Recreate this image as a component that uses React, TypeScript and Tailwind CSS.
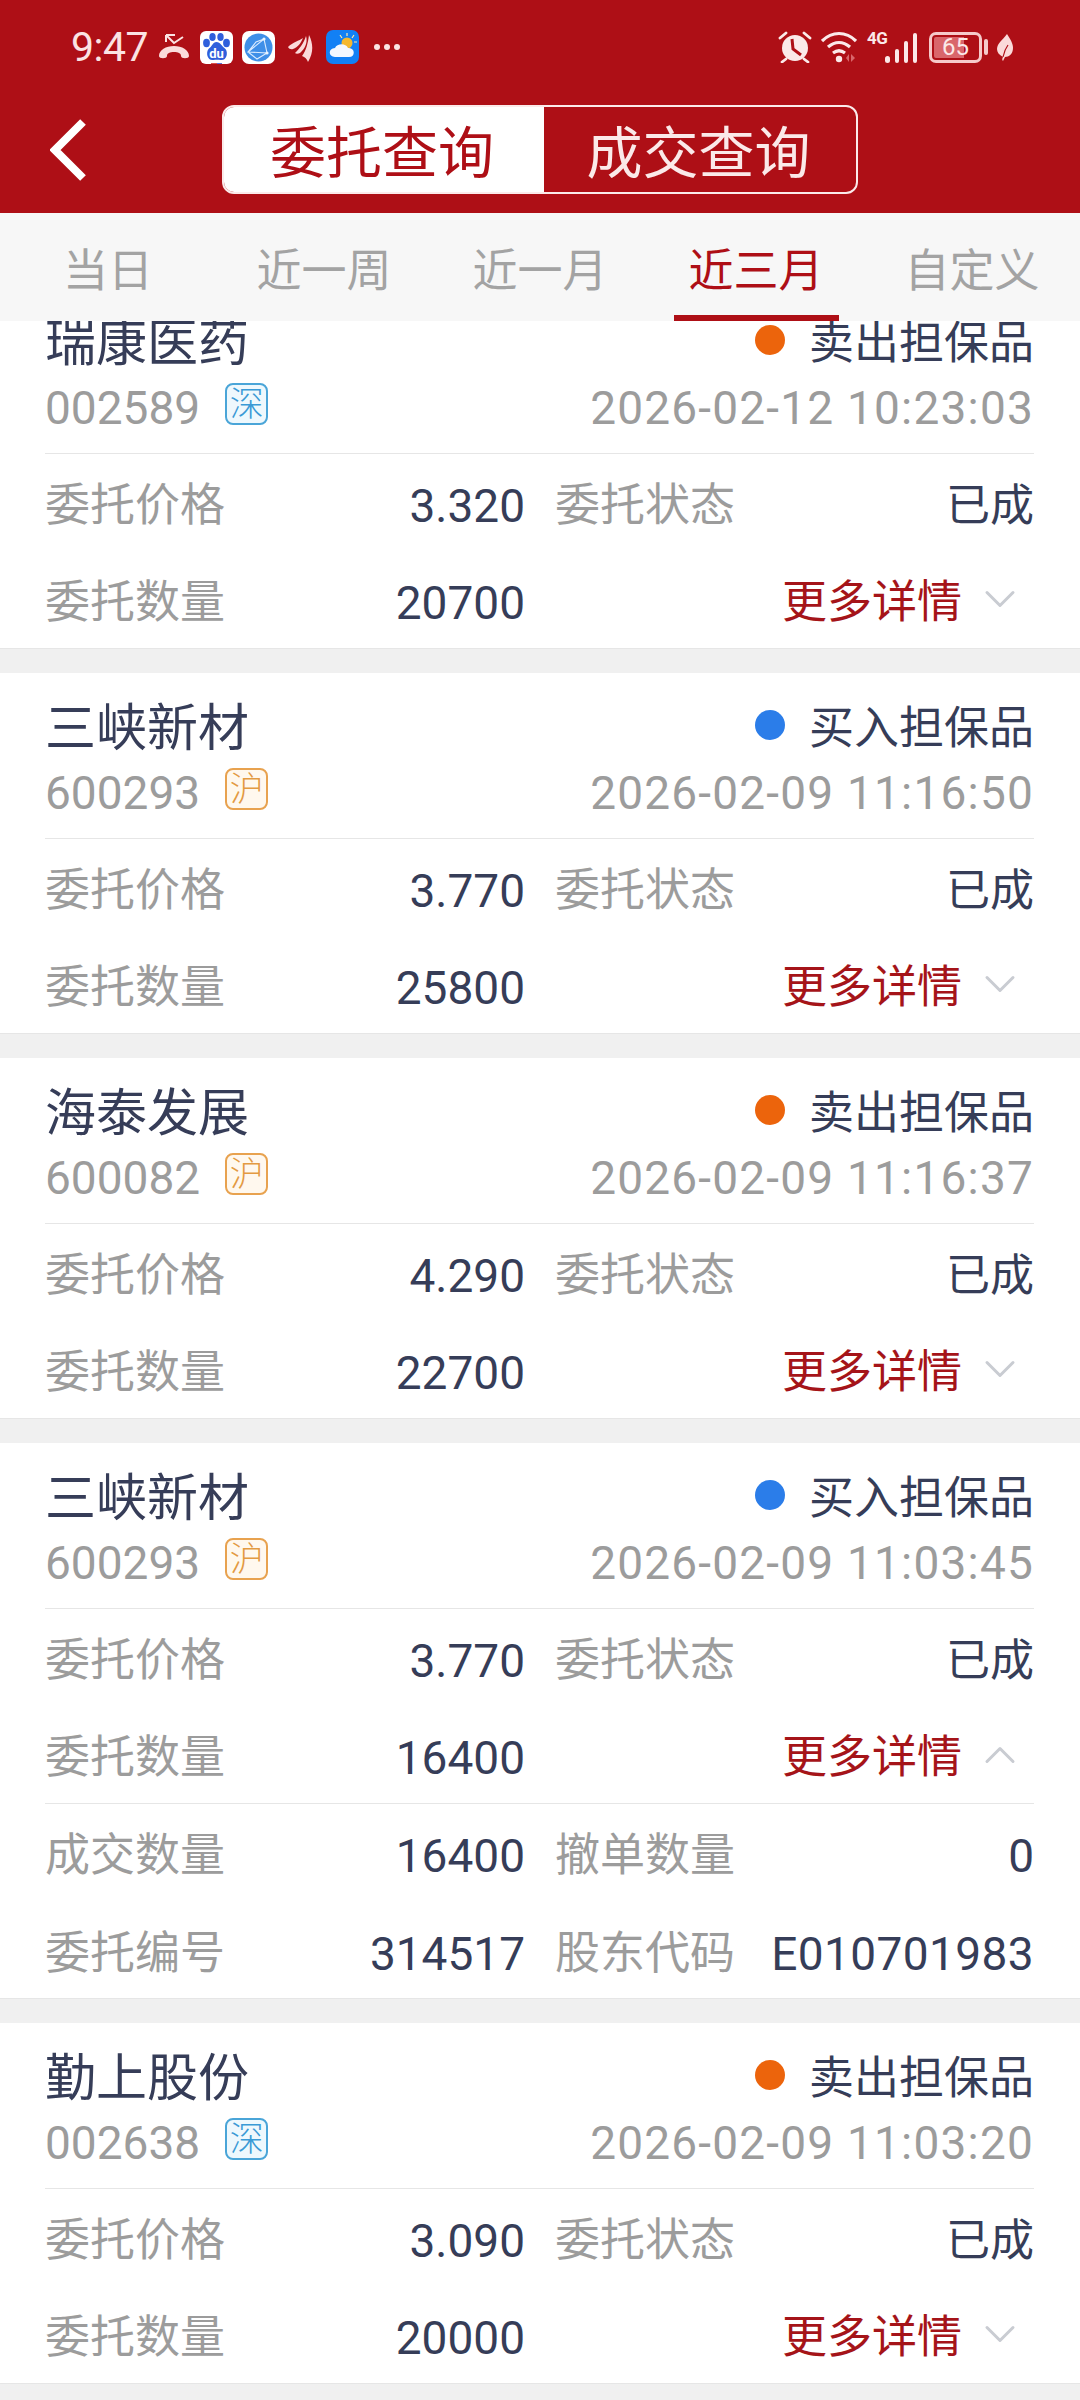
import { ChevronDown, ChevronUp } from 'lucide-react'

interface Order {
  name: string
  code: string
  market: '深' | '沪'
  side: '卖出担保品' | '买入担保品'
  time: string
  price: string
  qty: string
  extra?: { filled: string; cancelled: string; no: string; holder: string }
}

const orders: Order[] = [
  { name: '瑞康医药', code: '002589', market: '深', side: '卖出担保品', time: '2026-02-12 10:23:03', price: '3.320', qty: '20700' },
  { name: '三峡新材', code: '600293', market: '沪', side: '买入担保品', time: '2026-02-09 11:16:50', price: '3.770', qty: '25800' },
  { name: '海泰发展', code: '600082', market: '沪', side: '卖出担保品', time: '2026-02-09 11:16:37', price: '4.290', qty: '22700' },
  {
    name: '三峡新材',
    code: '600293',
    market: '沪',
    side: '买入担保品',
    time: '2026-02-09 11:03:45',
    price: '3.770',
    qty: '16400',
    extra: { filled: '16400', cancelled: '0', no: '314517', holder: 'E010701983' },
  },
  { name: '勤上股份', code: '002638', market: '深', side: '卖出担保品', time: '2026-02-09 11:03:20', price: '3.090', qty: '20000' },
]

const tabs = ['当日', '近一周', '近一月', '近三月', '自定义']

function StatusLeft() {
  return (
    <div className="flex items-center">
      <span className="w-[77px] text-[41px] leading-none tracking-[-0.5px] text-[#fbe3e3]">9:47</span>
      {/* missed call */}
      <svg className="ml-[10px] h-[26px] w-[32px]" viewBox="0 0 32 26" fill="none">
        <path d="M8 1h9M8 1v7M8 1l8 8 9-6" stroke="#fbe3e3" strokeWidth="2" />
        <path d="M1 22c0-6 7-10 15-10s15 4 15 10c0 3-8 3-8 0 0-3-3-4-7-4s-7 1-7 4c0 3-8 3-8 0z" fill="#fbdcdc" />
      </svg>
      {/* baidu */}
      <div className="ml-[10px] flex h-[33px] w-[33px] rounded-[6px] bg-white">
        <svg className="h-[33px] w-[33px]" viewBox="0 0 33 33">
          <ellipse cx="6.5" cy="12" rx="3.4" ry="4.2" fill="#2f5fdc" />
          <ellipse cx="12.5" cy="6" rx="3.2" ry="4" fill="#2f5fdc" />
          <ellipse cx="20.5" cy="6" rx="3.2" ry="4" fill="#2f5fdc" />
          <ellipse cx="26.5" cy="12" rx="3.4" ry="4.2" fill="#2f5fdc" />
          <path d="M16.5 11c4 0 5 4 9 7 3 4 1 12-5 11-2-.5-5-.5-7 0-6 1-8-7-5-11 4-3 4-7 8-7z" fill="#2f5fdc" />
          <text x="16.5" y="27" textAnchor="middle" fontSize="13" fontWeight="700" fill="#fff" fontFamily="Roboto, sans-serif">du</text>
          <path d="M11 32.5h6" stroke="#d8504f" strokeWidth="1" />
          <path d="M17 32.5h5" stroke="#5b6fd8" strokeWidth="1" />
        </svg>
      </div>
      {/* browser */}
      <div className="ml-[9px] flex h-[33px] w-[33px] items-center justify-center rounded-[7px] bg-white">
        <svg className="h-[29px] w-[29px]" viewBox="0 0 29 29" fill="none">
          <circle cx="14.5" cy="14.5" r="14" fill="#3f8fe8" />
          <path d="M4 19L20 6l3 14-10 6zM20 6l-8 3-8 10 19 1" stroke="#dcecff" strokeWidth="1.1" />
          <circle cx="20" cy="6" r="1.6" fill="#eaf4ff" />
          <circle cx="23" cy="20" r="1.6" fill="#eaf4ff" />
        </svg>
      </div>
      {/* feather */}
      <svg className="ml-[13px] h-[29px] w-[25px]" viewBox="0 0 25 29">
        <path d="M0 14C5 9 11 8 15 5c-2 5-5 9-10 11-2 .5-4 0-5-2z" fill="#fbdada" />
        <path d="M7 20c4-4 9-10 11-17 2 6-1 13-6 17-2 1-4 1-5 0z" fill="#fbdada" />
        <path d="M14 23c4-5 6-13 7-21 4 8 5 17-1 27-1-3-3-5-6-6z" fill="#fbdada" />
      </svg>
      {/* weather */}
      <div className="ml-[13px] flex h-[34px] w-[33px] items-center justify-center rounded-[7px] bg-[#1280f5]">
        <svg className="h-[30px] w-[30px]" viewBox="0 0 30 30">
          <circle cx="19" cy="11" r="5.5" fill="#f5b82e" />
          <path d="M19 1v3M26 3l-2 3M12 3l2 3M29 10h-3" stroke="#ffe9a8" strokeWidth="1.2" />
          <path d="M7 25c-7 0-7-9 0-9 2-5 11-5 13 0 7-1 8 9 1 9z" fill="#f4f8ff" />
        </svg>
      </div>
      {/* overflow */}
      <div className="ml-[15px] flex gap-[4px]">
        <span className="h-[6px] w-[6px] rounded-full bg-[#fbe3e3]" />
        <span className="h-[6px] w-[6px] rounded-full bg-[#fbe3e3]" />
        <span className="h-[6px] w-[6px] rounded-full bg-[#fbe3e3]" />
      </div>
    </div>
  )
}

function StatusRight() {
  return (
    <div className="flex items-center">
      {/* alarm */}
      <svg className="h-[32px] w-[34px]" viewBox="0 0 34 32">
        <path d="M2 7l6-5M32 7l-6-5M8 28l-4 3M26 28l4 3" stroke="#fbe9e9" strokeWidth="2.8" strokeLinecap="round" />
        <circle cx="17" cy="17" r="13" fill="#fbe9e9" />
        <path d="M14 8l1 10 8 6" stroke="#ae0f16" strokeWidth="3" fill="none" />
      </svg>
      {/* wifi */}
      <svg className="ml-[9px] h-[32px] w-[36px]" viewBox="0 0 36 32" fill="none">
        <path d="M1 10c10-10 24-10 34 0M7 16c7-6 15-6 22 0M12 22c4-3 8-3 12 0" stroke="#fbe9e9" strokeWidth="3.2" />
        <circle cx="18" cy="28" r="3.2" fill="#fbe9e9" />
        <path d="M28 23v8l-3-4zM30 23v8l4-4z" fill="#d9666b" />
      </svg>
      <div className="ml-[10px] flex h-[31px] w-[50px] items-end">
        <span className="mb-[16px] w-0 text-[17px] font-bold leading-none tracking-[-0.5px] text-[#fbe9e9]">4G</span>
        <div className="flex w-full items-end justify-end gap-[5px]">
          <span className="h-[7px] w-[5px] rounded-full bg-[#fbe9e9]" />
          <span className="h-[14px] w-[4px] rounded-full bg-[#fbe9e9]" />
          <span className="h-[22px] w-[4px] rounded-full bg-[#fbe9e9]" />
          <span className="h-[30px] w-[4px] rounded-full bg-[#fbe9e9]" />
        </div>
      </div>
      {/* battery */}
      <div className="ml-[12px] flex h-[31px] w-[53px] items-center justify-center rounded-[7px] border-[3px] border-[#f6caca] bg-[linear-gradient(90deg,#d9666b_68%,transparent_68%)] bg-clip-content p-[2px]">
        <span className="text-[24px] leading-none text-[#fbe9e9]">65</span>
      </div>
      <span className="ml-[2px] h-[16px] w-[4px] rounded-full bg-[#f6caca]" />
      {/* leaf */}
      <svg className="ml-[9px] h-[27px] w-[16px]" viewBox="0 0 16 27">
        <path d="M10 0c4 6 6 10 6 14 0 6-4 9-8 9l-2 4c-1-1-1-2 0-4-4-2-6-5-6-8 0-6 6-9 10-15z" fill="#fbdada" />
        <path d="M6 23c1-5 2-8 5-12" stroke="#ae0f16" strokeWidth="1.2" fill="none" />
      </svg>
    </div>
  )
}

function Field({ label, value, children }: { label?: string; value?: string; children?: React.ReactNode }) {
  return (
    <div className="flex h-[92px] items-center justify-between pt-[3px]">
      <span className="text-[45px] leading-none text-[#9c9c9c]">{label}</span>
      {children ?? <span className="text-[46px] leading-none text-[#363d58]">{value}</span>}
    </div>
  )
}

function MoreLink({ open }: { open: boolean }) {
  const Icon = open ? ChevronUp : ChevronDown
  return (
    <span className="flex items-center text-[45px] leading-none text-[#a51419]">
      更多详情
      <Icon className={`ml-[12px] mr-[8px] h-[52px] w-[52px] text-[#c9ccd2] ${open ? 'mb-[6px]' : 'mb-[8px]'}`} strokeWidth={1.4} />
    </span>
  )
}

function OrderCard({ order }: { order: Order }) {
  const isSell = order.side === '卖出担保品'
  const isShenzhen = order.market === '深'
  return (
    <section className="border-b border-[#e6e6e6] bg-white">
      <div className="pl-[45px] pr-[46px]">
        <div className="pb-[15px] pt-[22px]">
          <div className="flex h-[64px] items-center justify-between">
            <span className="pt-[2px] text-[51px] leading-none text-[#363d58]">{order.name}</span>
            <span className="flex items-center pt-[2px] text-[45px] leading-none text-[#363d58]">
              <span className={`mb-[6px] mr-[24px] h-[30px] w-[30px] rounded-full ${isSell ? 'bg-[#ec640c]' : 'bg-[#2b7de9]'}`} />
              {order.side}
            </span>
          </div>
          <div className="flex h-[64px] items-center justify-between">
            <span className="flex items-center text-[46px] leading-none text-[#9c9c9c]">
              <span className="pt-[3px]">{order.code}</span>
              <span
                className={`mb-[4px] ml-[25px] flex h-[42px] w-[43px] items-center justify-center rounded-[8px] border-2 text-[34px] font-light leading-none ${
                  isShenzhen ? 'border-[#4aa5d8] bg-[#eef8fd] text-[#3a9ad6]' : 'border-[#e8a24f] bg-[#fff8ee] text-[#e39a42]'
                }`}
              >
                {order.market}
              </span>
            </span>
            <span className="pt-[3px] text-[46px] leading-none tracking-[1.2px] text-[#9c9c9c]">{order.time}</span>
          </div>
        </div>
        <div className="grid grid-cols-[480px_1fr] gap-x-[30px] gap-y-[5px] border-t border-[#e6e6e6] pb-[1px] pt-[4px]">
          <Field label="委托价格" value={order.price} />
          <Field label="委托状态">
            <span className="text-[44px] leading-none text-[#363d58]">已成</span>
          </Field>
          <Field label="委托数量" value={order.qty} />
          <Field>
            <span className="ml-auto"><MoreLink open={!!order.extra} /></span>
          </Field>
        </div>
        {order.extra && (
          <div className="grid grid-cols-[480px_1fr] gap-x-[30px] gap-y-[6px] border-t border-[#e6e6e6] pt-[4px]">
            <Field label="成交数量" value={order.extra.filled} />
            <Field label="撤单数量" value={order.extra.cancelled} />
            <Field label="委托编号" value={order.extra.no} />
            <Field label="股东代码">
              <span className="text-[46px] leading-none tracking-[0.4px] text-[#363d58]">{order.extra.holder}</span>
            </Field>
          </div>
        )}
      </div>
    </section>
  )
}

export default function App() {
  return (
    <div className="flex h-[2400px] w-[1080px] flex-col overflow-hidden bg-[#f0f0f0] font-['Roboto','Noto_Sans_CJK_SC',sans-serif]">
      <header className="h-[213px] shrink-0 bg-[#ae0f16]">
        <div className="flex h-[94px] items-center justify-between pl-[71px] pr-[67px]">
          <StatusLeft />
          <StatusRight />
        </div>
        <div className="flex items-start pl-[50px] pt-[11px]">
          <svg className="mt-[14px] h-[62px] w-[36px]" viewBox="0 0 36 62" fill="none">
            <path d="M33 3L5 31l28 28" stroke="#fff" strokeWidth="8" />
          </svg>
          <div className="ml-[136px] flex h-[89px] w-[636px] overflow-hidden rounded-[12px] border-2 border-[#fbeaea]">
            <div className="flex w-[320px] items-center justify-center bg-white pr-[4px] pt-[8px] text-[56px] leading-none text-[#ae0f16]">委托查询</div>
            <div className="flex flex-1 items-center justify-center pr-[3px] pt-[8px] text-[56px] leading-none text-[#fbe9e9]">成交查询</div>
          </div>
        </div>
      </header>

      <nav className="grid h-[108px] shrink-0 grid-cols-5 bg-[#f7f7f7]">
        {tabs.map((tab) => {
          const active = tab === '近三月'
          return (
            <div key={tab} className="flex flex-col items-center">
              <span className={`flex flex-1 items-center pt-[14px] text-[45px] leading-none ${active ? 'text-[#ae0f16]' : 'text-[#a3a3a3]'}`}>
                {tab}
              </span>
              <span className={`h-[6px] w-[165px] ${active ? 'bg-[#ae0f16]' : ''}`} />
            </div>
          )
        })}
      </nav>

      <div className="flex-1 overflow-hidden">
        <div className="mt-[-33px] flex flex-col gap-[24px]">
          {orders.map((order) => (
            <OrderCard key={order.time} order={order} />
          ))}
        </div>
      </div>
    </div>
  )
}
